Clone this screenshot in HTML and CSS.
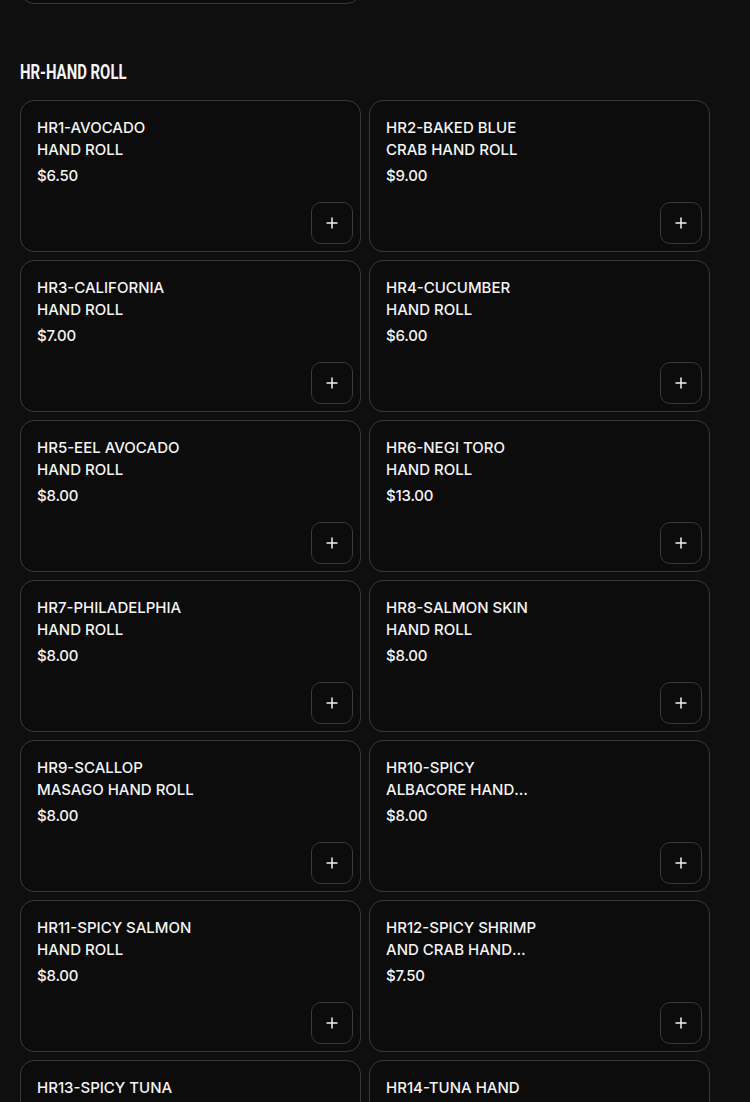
FILE: index.html
```html
<!DOCTYPE html>
<html lang="en">
<head>
<meta charset="utf-8">
<title>Menu</title>
<link rel="stylesheet" href="styles.css">
</head>
<body>
<main class="page">
  <section class="section section-prev">
    <div class="grid">
      <div class="card card-empty"></div>
    </div>
  </section>

  <section class="section">
    <h2 class="section-title"><span>HR-HAND ROLL</span></h2>
    <div class="grid">
      <div class="card"><div class="title">HR1-AVOCADO HAND&nbsp;ROLL</div><div class="price">$6.50</div><button class="add" aria-label="Add"><svg viewBox="0 0 12 12" width="12" height="12"><path d="M6 0.5V11.5M0.5 6H11.5" stroke="#f2f2f2" stroke-width="1.5" fill="none"/></svg></button></div>
      <div class="card"><div class="title">HR2-BAKED BLUE CRAB HAND ROLL</div><div class="price">$9.00</div><button class="add" aria-label="Add"><svg viewBox="0 0 12 12" width="12" height="12"><path d="M6 0.5V11.5M0.5 6H11.5" stroke="#f2f2f2" stroke-width="1.5" fill="none"/></svg></button></div>
      <div class="card"><div class="title">HR3-CALIFORNIA HAND ROLL</div><div class="price">$7.00</div><button class="add" aria-label="Add"><svg viewBox="0 0 12 12" width="12" height="12"><path d="M6 0.5V11.5M0.5 6H11.5" stroke="#f2f2f2" stroke-width="1.5" fill="none"/></svg></button></div>
      <div class="card"><div class="title">HR4-CUCUMBER HAND ROLL</div><div class="price">$6.00</div><button class="add" aria-label="Add"><svg viewBox="0 0 12 12" width="12" height="12"><path d="M6 0.5V11.5M0.5 6H11.5" stroke="#f2f2f2" stroke-width="1.5" fill="none"/></svg></button></div>
      <div class="card"><div class="title">HR5-EEL AVOCADO HAND ROLL</div><div class="price">$8.00</div><button class="add" aria-label="Add"><svg viewBox="0 0 12 12" width="12" height="12"><path d="M6 0.5V11.5M0.5 6H11.5" stroke="#f2f2f2" stroke-width="1.5" fill="none"/></svg></button></div>
      <div class="card"><div class="title">HR6-NEGI TORO HAND ROLL</div><div class="price">$13.00</div><button class="add" aria-label="Add"><svg viewBox="0 0 12 12" width="12" height="12"><path d="M6 0.5V11.5M0.5 6H11.5" stroke="#f2f2f2" stroke-width="1.5" fill="none"/></svg></button></div>
      <div class="card"><div class="title">HR7-PHILADELPHIA HAND ROLL</div><div class="price">$8.00</div><button class="add" aria-label="Add"><svg viewBox="0 0 12 12" width="12" height="12"><path d="M6 0.5V11.5M0.5 6H11.5" stroke="#f2f2f2" stroke-width="1.5" fill="none"/></svg></button></div>
      <div class="card"><div class="title">HR8-SALMON SKIN HAND ROLL</div><div class="price">$8.00</div><button class="add" aria-label="Add"><svg viewBox="0 0 12 12" width="12" height="12"><path d="M6 0.5V11.5M0.5 6H11.5" stroke="#f2f2f2" stroke-width="1.5" fill="none"/></svg></button></div>
      <div class="card"><div class="title">HR9-SCALLOP MASAGO HAND ROLL</div><div class="price">$8.00</div><button class="add" aria-label="Add"><svg viewBox="0 0 12 12" width="12" height="12"><path d="M6 0.5V11.5M0.5 6H11.5" stroke="#f2f2f2" stroke-width="1.5" fill="none"/></svg></button></div>
      <div class="card"><div class="title">HR10-SPICY ALBACORE HAND ROLL</div><div class="price">$8.00</div><button class="add" aria-label="Add"><svg viewBox="0 0 12 12" width="12" height="12"><path d="M6 0.5V11.5M0.5 6H11.5" stroke="#f2f2f2" stroke-width="1.5" fill="none"/></svg></button></div>
      <div class="card"><div class="title">HR11-SPICY SALMON HAND ROLL</div><div class="price">$8.00</div><button class="add" aria-label="Add"><svg viewBox="0 0 12 12" width="12" height="12"><path d="M6 0.5V11.5M0.5 6H11.5" stroke="#f2f2f2" stroke-width="1.5" fill="none"/></svg></button></div>
      <div class="card"><div class="title">HR12-SPICY SHRIMP AND CRAB HAND ROLL</div><div class="price">$7.50</div><button class="add" aria-label="Add"><svg viewBox="0 0 12 12" width="12" height="12"><path d="M6 0.5V11.5M0.5 6H11.5" stroke="#f2f2f2" stroke-width="1.5" fill="none"/></svg></button></div>
      <div class="card"><div class="title">HR13-SPICY TUNA HAND ROLL</div><div class="price">$8.00</div><button class="add" aria-label="Add"><svg viewBox="0 0 12 12" width="12" height="12"><path d="M6 0.5V11.5M0.5 6H11.5" stroke="#f2f2f2" stroke-width="1.5" fill="none"/></svg></button></div>
      <div class="card"><div class="title">HR14-TUNA HAND ROLL</div><div class="price">$8.00</div><button class="add" aria-label="Add"><svg viewBox="0 0 12 12" width="12" height="12"><path d="M6 0.5V11.5M0.5 6H11.5" stroke="#f2f2f2" stroke-width="1.5" fill="none"/></svg></button></div>
    </div>
  </section>
</main>
</body>
</html>
```

FILE: styles.css
```css
html, body {
  margin: 0;
  padding: 0;
  background: #0f0f0f;
}

body {
  font-family: Inter, "Liberation Sans", sans-serif;
  color: #f4f4f4;
  overflow: hidden;
}

.page {
  width: 690px;
  padding: 0 40px 40px 20px;
  margin-top: -148px;
}

.section-title {
  margin: 56px 0 16px;
  font-family: Roboto, "Liberation Sans", sans-serif;
  font-weight: 700;
  font-size: 21px;
  line-height: 24px;
  height: 24px;
  color: #f6f6f6;
  white-space: nowrap;
}

.section-title span {
  display: inline-block;
  transform: scaleX(0.71);
  transform-origin: left center;
}

.grid {
  display: grid;
  grid-template-columns: 1fr 1fr;
  gap: 8px;
}

.card {
  height: 152px;
  box-sizing: border-box;
  border: 1px solid #393939;
  border-radius: 14px;
  background: #0c0c0c;
  padding: 16px 7px 7px 16px;
  display: flex;
  flex-direction: column;
  align-items: flex-start;
}

.title {
  width: 159px;
  font-size: 15px;
  line-height: 22px;
  font-weight: 500;
  display: -webkit-box;
  -webkit-line-clamp: 2;
  -webkit-box-orient: vertical;
  overflow: hidden;
}

.price {
  margin-top: 4px;
  font-size: 15px;
  font-weight: 500;
  line-height: 22px;
  letter-spacing: -0.2px;
}

.add {
  margin-top: auto;
  align-self: flex-end;
  width: 42px;
  height: 42px;
  box-sizing: border-box;
  border: 1px solid #3a3a3a;
  border-radius: 10px;
  background: #0c0c0c;
  display: flex;
  align-items: center;
  justify-content: center;
  padding: 0;
  cursor: pointer;
}

.add svg {
  display: block;
}
```
